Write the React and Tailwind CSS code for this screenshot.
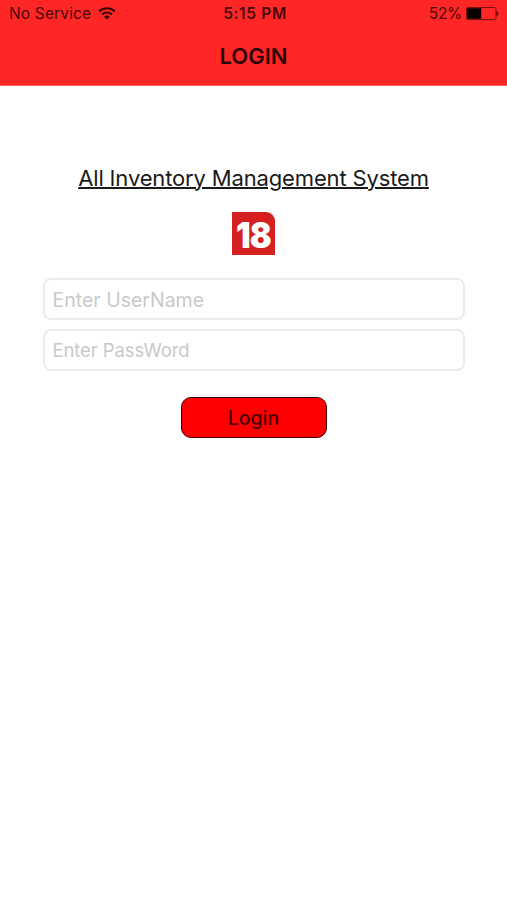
import { useState } from 'react';

function WifiIcon() {
  return (
    <svg width="18" height="13" viewBox="0 0 18 13" fill="none" stroke="#3d0505" aria-hidden="true">
      <path d="M1.200 4.400a11.200 11.200 0 0 1 15.600 0" strokeWidth="2.200" />
      <path d="M4 7.500a7.200 7.200 0 0 1 10 0" strokeWidth="2" />
      <path d="M9 12.500 6 9.700a4.200 4.200 0 0 1 6 0z" fill="#3d0505" stroke="none" />
    </svg>
  );
}

function BatteryIcon() {
  return (
    <svg width="33" height="13" viewBox="0 0 33 13" aria-hidden="true">
      <rect x="0.5" y="0.5" width="29.5" height="12" rx="1.5" fill="none" stroke="#7a1010" />
      <rect x="1.2" y="1.2" width="14" height="10.6" fill="#0a0000" />
      <path d="M30.500 4c1.400.5 2 1.400 2 2.500s-.6 2-2 2.500z" fill="#5a0808" />
    </svg>
  );
}

function StatusBar() {
  return (
    <div className="grid h-[27px] grid-cols-3 items-center text-[15.500px] leading-none text-[#4a0808]">
      <div className="flex items-center gap-[7px] pl-[9px]">
        <span className="tracking-[0.15px] whitespace-nowrap">No Service</span>
        <WifiIcon />
      </div>
      <span className="pl-[3px] text-center font-semibold tracking-[0.65px]">5:15 PM</span>
      <div className="flex items-center justify-end gap-1 pr-2">
        <span className="tracking-[-0.3px]">52%</span>
        <BatteryIcon />
      </div>
    </div>
  );
}

function Logo() {
  return (
    <div className="mt-5 flex h-[43px] w-[43px] items-center justify-center rounded-tr-[9px] bg-[#d6201f]">
      <span className="mt-0.5 -ml-px scale-x-90 text-[36px] leading-none font-black tracking-[-1px] text-white">
        18
      </span>
    </div>
  );
}

function App() {
  const [userName, setUserName] = useState('');
  const [password, setPassword] = useState('');

  function handleSubmit(e) {
    e.preventDefault();
  }

  return (
    <div className="min-h-screen bg-white font-['Inter',sans-serif]">
      <header className="h-[86px] border-b border-[#f06060] bg-[#ff2626]">
        <StatusBar />
        <h1 className="mt-[15px] text-center text-[22px] leading-7 font-semibold text-[#2b0303]">
          LOGIN
        </h1>
      </header>

      <main className="flex flex-col items-center">
        <h2 className="mt-[78px] text-[22px] leading-7 tracking-[-0.15px] whitespace-nowrap text-[#1a1a1a] underline decoration-[1.500px] underline-offset-1">
          All Inventory Management System
        </h2>
        <Logo />

        <form onSubmit={handleSubmit} noValidate className="mt-[23px] flex flex-col items-center">
          <input
            type="text"
            aria-label="Username"
            value={userName}
            onChange={(e) => setUserName(e.target.value)}
            placeholder="Enter UserName"
            className="h-[42px] w-[422px] rounded-lg border-2 border-[#ebebeb] px-2 pt-px text-[19.500px] placeholder-[#c9c9c9] outline-none"
          />
          <input
            type="password"
            aria-label="Password"
            value={password}
            onChange={(e) => setPassword(e.target.value)}
            placeholder="Enter PassWord"
            className="mt-[9px] h-[42px] w-[422px] rounded-lg border-2 border-[#ebebeb] px-2 text-[18.500px] tracking-[-0.1px] placeholder-[#c9c9c9] outline-none"
          />
          <button
            type="submit"
            className="mt-[26px] h-[41px] w-[146px] rounded-[10px] border-[1.500px] border-[#3a0000] bg-[#ff0000] pt-0.5 text-[19.500px] font-medium text-[#4a0000]"
          >
            Login
          </button>
        </form>
      </main>
    </div>
  );
}

export default App;
